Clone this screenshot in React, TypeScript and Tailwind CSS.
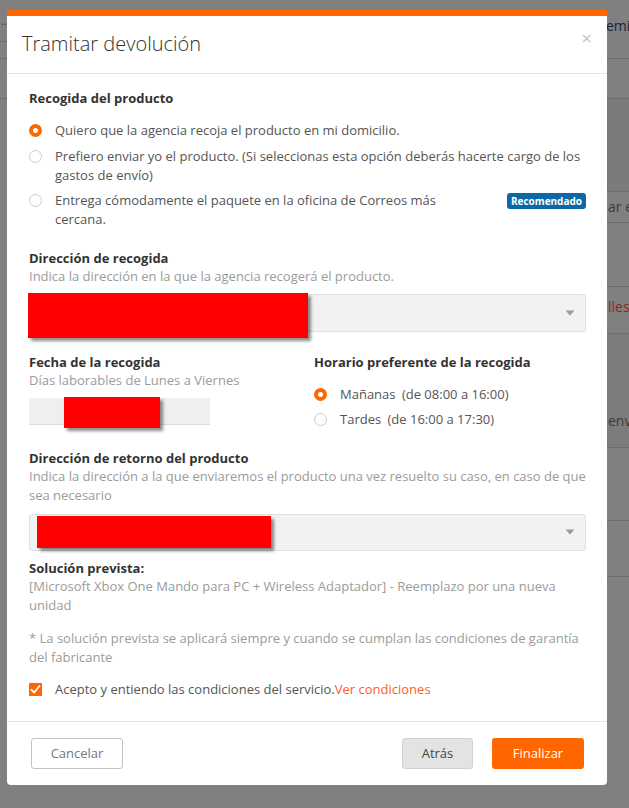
import React from "react";

const ORANGE = "#ff6600";

function Radio({ checked = false }: { checked?: boolean }) {
  return checked ? (
    <span className="mt-[3px] block h-[13px] w-[13px] shrink-0 rounded-full border-[4px] border-[#ff6600] bg-white" />
  ) : (
    <span className="mt-[3px] block h-[13px] w-[13px] shrink-0 rounded-full border border-[#cdcdcd] bg-white" />
  );
}

function Caret() {
  return (
    <svg width="10" height="6" viewBox="0 0 10 6" className="block">
      <path d="M0.5 0.5 L9.5 0.5 L5 5.5 Z" fill="#9a9a9a" />
    </svg>
  );
}

function Redaction({ className }: { className: string }) {
  return <div className={`absolute bg-[#ff0000] shadow-[3px_3px_3px_rgba(0,0,0,0.45)] ${className}`} />;
}

function Backdrop() {
  return (
    <div className="flex h-full w-full">
      {/* left edge of the page behind the dialog */}
      <div className="flex w-[7px] flex-col overflow-hidden">
        <div className="flex h-[42px] items-center border-b border-[#6c6c6c] text-[10px] leading-none text-[#3a3a3a]">
          <span className="pl-[1px]">..</span>
        </div>
        <div className="h-[17px] border-b border-[#6c6c6c]" />
        <div className="h-[40px] border-b border-[#6c6c6c]" />
      </div>
      <div className="flex-1" />
      {/* right edge of the page behind the dialog */}
      <div className="flex w-[22px] flex-col overflow-hidden whitespace-nowrap text-[14px] leading-none">
        <div className="flex h-[59px] items-start border-b border-[#6c6c6c] pt-[19px] text-[#22223a]">
          <span className="-ml-[1px]">emi</span>
        </div>
        <div className="h-[40px] border-b border-[#6c6c6c]" />
        <div className="h-[93px] border-b border-[#6c6c6c] bg-[#7b7b7b]" />
        <div className="flex h-[31px] items-center border-b border-[#6c6c6c] text-[#3a3a3a]">
          <span className="ml-[1px]">ar e</span>
        </div>
        <div className="h-[64px] border-b border-[#6c6c6c]" />
        <div className="flex h-[47px] items-start border-b border-[#6c6c6c] pt-[13px] text-[#8a2b1c]">
          <span className="ml-[1px]">lles</span>
        </div>
        <div className="flex h-[114px] items-end border-b border-[#6c6c6c] bg-[#7c7c7c] pb-[19px] text-[#3a3a3a]">
          <span className="ml-[1px]">env</span>
        </div>
        <div className="h-[73px] border-b border-[#6c6c6c]" />
        <div className="h-[56px] border-b border-[#6c6c6c]" />
      </div>
    </div>
  );
}

export default function App() {
  return (
    <div className="relative h-[808px] w-[629px] overflow-hidden bg-[#808080] font-['Open_Sans','Noto_Sans',sans-serif]">
      <Backdrop />

      {/* dialog */}
      <div className="absolute left-[7px] top-[10px] w-[600px] rounded-b-[4px] border-t-[6px] border-[#ff6600] bg-white">
        <div className="flex h-[58px] items-center justify-between border-b border-[#e5e5e5] pl-[15px] pr-[15px]">
          <h2 className="pb-[3px] text-[20px] font-light leading-[27px] text-[#333]">Tramitar devolución</h2>
          <span className="-mt-[12px] text-[19px] leading-none text-[#c4c4c4]">×</span>
        </div>

        <div className="pb-[22px] pl-[22px] pr-[21px] pt-[15px] text-[13px] leading-[19px] text-[#555]">
          <h3 className="text-[13px] font-bold leading-[18px] text-[#333]">Recogida del producto</h3>

          <div className="mt-[14px] flex flex-col gap-[6.5px]">
            <label className="flex items-start gap-[13px]">
              <Radio checked />
              <span>Quiero que la agencia recoja el producto en mi domicilio.</span>
            </label>
            <label className="flex items-start gap-[13px]">
              <Radio />
              <span>
                Prefiero enviar yo el producto. (Si seleccionas esta opción deberás hacerte cargo de los gastos de envío)
              </span>
            </label>
            <div className="flex items-start justify-between">
              <label className="flex w-[420px] items-start gap-[13px]">
                <Radio />
                <span>Entrega cómodamente el paquete en la oficina de Correos más cercana.</span>
              </label>
              <span className="mt-[2px] rounded-[3px] bg-[#0b6aa6] px-[4px] text-[10px] font-bold leading-[16px] text-white">
                Recomendado
              </span>
            </div>
          </div>

          <h3 className="mt-[20px] text-[13px] font-bold leading-[18px] text-[#333]">Dirección de recogida</h3>
          <p className="text-[#9b9b9b]">Indica la dirección en la que la agencia recogerá el producto.</p>
          <div className="relative mt-[8px] flex h-[38px] items-center justify-end rounded-[3px] border border-[#e0e0e0] bg-[#f2f2f2] pr-[10px]">
            <Caret />
            <Redaction className="-left-[2px] -top-[2px] h-[45px] w-[280px]" />
          </div>

          <div className="mt-[21px] grid grid-cols-[285px_1fr]">
            <div>
              <h3 className="text-[13px] font-bold leading-[18px] text-[#333]">Fecha de la recogida</h3>
              <p className="text-[#9b9b9b]">Días laborables de Lunes a Viernes</p>
              <div className="relative mt-[8px] h-[27px] w-[181px] border-b border-[#dcdcdc] bg-[#efefef]">
                <Redaction className="-top-[1px] left-[35px] h-[31px] w-[96px]" />
              </div>
            </div>
            <div>
              <h3 className="text-[13px] font-bold leading-[18px] text-[#333]">Horario preferente de la recogida</h3>
              <div className="mt-[13.5px] flex flex-col gap-[6px]">
                <label className="flex items-start gap-[13px]">
                  <Radio checked />
                  <span>
                    Mañanas <span className="ml-[3px]">(de 08:00 a 16:00)</span>
                  </span>
                </label>
                <label className="flex items-start gap-[13px]">
                  <Radio />
                  <span>
                    Tardes <span className="ml-[3px]">(de 16:00 a 17:30)</span>
                  </span>
                </label>
              </div>
            </div>
          </div>

          <h3 className="mt-[20px] text-[13px] font-bold leading-[18px] text-[#333]">Dirección de retorno del producto</h3>
          <p className="text-[#9b9b9b]">
            Indica la dirección a la que enviaremos el producto una vez resuelto su caso, en caso de que sea necesario
          </p>
          <div className="relative mt-[9px] flex h-[37px] items-center justify-end rounded-[3px] border border-[#e0e0e0] bg-[#f2f2f2] pr-[10px]">
            <Caret />
            <Redaction className="left-[7px] top-[1px] h-[32px] w-[234px]" />
          </div>

          <h3 className="mt-[8px] text-[13px] font-bold leading-[18px] text-[#333]">Solución prevista:</h3>
          <p className="text-[#9b9b9b]">
            [Microsoft Xbox One Mando para PC + Wireless Adaptador] - Reemplazo por una nueva unidad
          </p>

          <p className="mt-[14.5px] text-[#9b9b9b]">
            * La solución prevista se aplicará siempre y cuando se cumplan las condiciones de garantía del fabricante
          </p>

          <label className="mt-[13px] flex items-start gap-[13px]">
            <span className="mt-[3px] flex h-[13px] w-[13px] shrink-0 items-center justify-center bg-[#ff6600]">
              <svg width="11" height="11" viewBox="0 0 11 11">
                <path d="M1.5 5.8 L4.2 8.5 L9.5 2" fill="none" stroke="#fff" strokeWidth="1.8" strokeLinecap="round" strokeLinejoin="round" />
              </svg>
            </span>
            <span>
              Acepto y entiendo las condiciones del servicio.<span className="text-[#ff5b2e]">Ver condiciones</span>
            </span>
          </label>
        </div>

        <div className="flex items-center justify-between border-t border-[#e5e5e5] pb-[16px] pl-[24px] pr-[23px] pt-[16px] text-[13px]">
          <button className="h-[31px] w-[92px] rounded-[3px] border border-[#c2c2c2] bg-white text-[#777]">Cancelar</button>
          <div className="flex gap-[19px]">
            <button className="h-[31px] w-[71px] rounded-[3px] border border-[#d0d0d0] bg-[#e3e3e3] text-[#444]">Atrás</button>
            <button className="h-[31px] w-[92px] rounded-[3px] text-white" style={{ backgroundColor: ORANGE }}>
              Finalizar
            </button>
          </div>
        </div>
      </div>
    </div>
  );
}
